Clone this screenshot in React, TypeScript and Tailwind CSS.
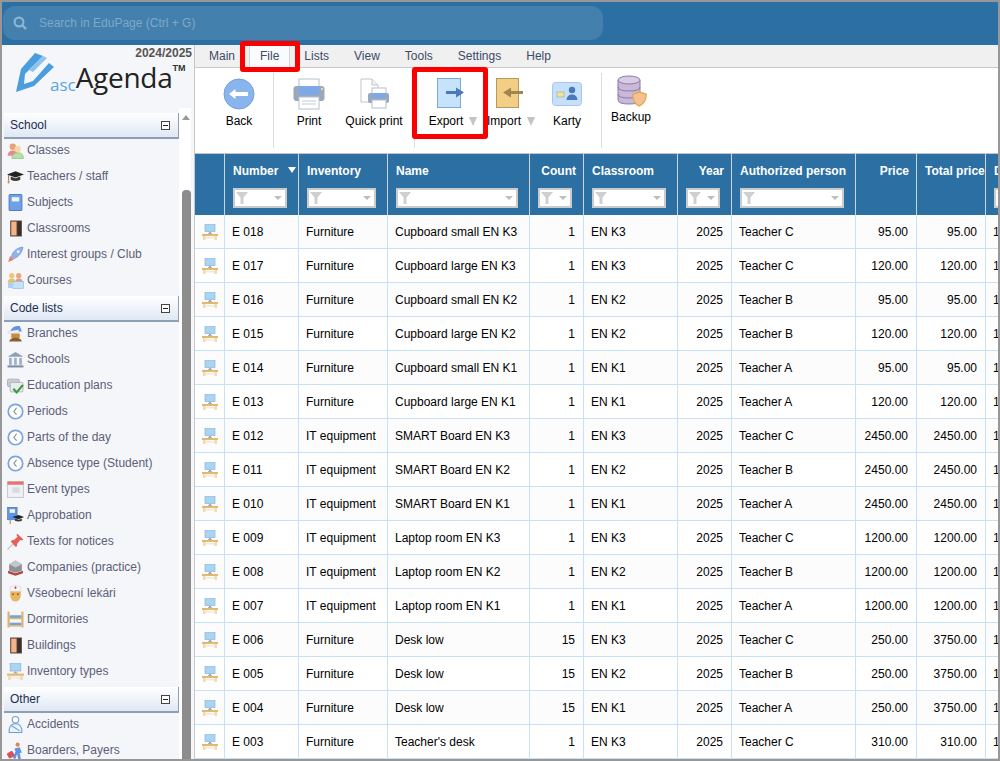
import React from "react";

type Row = {
  id: string;
  inv: string;
  name: string;
  count: number;
  room: string;
  person: string;
  price: string;
  total: string;
};

const rows: Row[] = [
  { id: "E 018", inv: "Furniture", name: "Cupboard small EN K3", count: 1, room: "EN K3", person: "Teacher C", price: "95.00", total: "95.00" },
  { id: "E 017", inv: "Furniture", name: "Cupboard large EN K3", count: 1, room: "EN K3", person: "Teacher C", price: "120.00", total: "120.00" },
  { id: "E 016", inv: "Furniture", name: "Cupboard small EN K2", count: 1, room: "EN K2", person: "Teacher B", price: "95.00", total: "95.00" },
  { id: "E 015", inv: "Furniture", name: "Cupboard large EN K2", count: 1, room: "EN K2", person: "Teacher B", price: "120.00", total: "120.00" },
  { id: "E 014", inv: "Furniture", name: "Cupboard small EN K1", count: 1, room: "EN K1", person: "Teacher A", price: "95.00", total: "95.00" },
  { id: "E 013", inv: "Furniture", name: "Cupboard large EN K1", count: 1, room: "EN K1", person: "Teacher A", price: "120.00", total: "120.00" },
  { id: "E 012", inv: "IT equipment", name: "SMART Board EN K3", count: 1, room: "EN K3", person: "Teacher C", price: "2450.00", total: "2450.00" },
  { id: "E 011", inv: "IT equipment", name: "SMART Board EN K2", count: 1, room: "EN K2", person: "Teacher B", price: "2450.00", total: "2450.00" },
  { id: "E 010", inv: "IT equipment", name: "SMART Board EN K1", count: 1, room: "EN K1", person: "Teacher A", price: "2450.00", total: "2450.00" },
  { id: "E 009", inv: "IT equipment", name: "Laptop room EN K3", count: 1, room: "EN K3", person: "Teacher C", price: "1200.00", total: "1200.00" },
  { id: "E 008", inv: "IT equipment", name: "Laptop room EN K2", count: 1, room: "EN K2", person: "Teacher B", price: "1200.00", total: "1200.00" },
  { id: "E 007", inv: "IT equipment", name: "Laptop room EN K1", count: 1, room: "EN K1", person: "Teacher A", price: "1200.00", total: "1200.00" },
  { id: "E 006", inv: "Furniture", name: "Desk low", count: 15, room: "EN K3", person: "Teacher C", price: "250.00", total: "3750.00" },
  { id: "E 005", inv: "Furniture", name: "Desk low", count: 15, room: "EN K2", person: "Teacher B", price: "250.00", total: "3750.00" },
  { id: "E 004", inv: "Furniture", name: "Desk low", count: 15, room: "EN K1", person: "Teacher A", price: "250.00", total: "3750.00" },
  { id: "E 003", inv: "Furniture", name: "Teacher's desk", count: 1, room: "EN K3", person: "Teacher C", price: "310.00", total: "310.00" },
];

function Ico({ children, size = 17 }: { children: React.ReactNode; size?: number }) {
  return (
    <svg width={size} height={size} viewBox="0 0 16 16" className="block shrink-0">
      {children}
    </svg>
  );
}

const DeskIcon = ({ size = 16 }: { size?: number }) => (
  <Ico size={size}>
    <rect x="3" y="0" width="10" height="7.5" fill="#a9d5f2" stroke="#8cb4d2" strokeWidth="0.7" />
    <rect x="7" y="8" width="2" height="1.5" fill="#9aa7b0" />
    <rect x="6" y="9" width="4" height="0.8" fill="#9aa7b0" />
    <rect x="0" y="10" width="16" height="2" fill="#e2b96f" />
    <rect x="1" y="12" width="2.6" height="4" fill="#efdcb4" />
    <rect x="12.4" y="12" width="2.6" height="4" fill="#efdcb4" />
    <rect x="3.6" y="13" width="8.8" height="1.4" fill="#f3e7cd" />
  </Ico>
);

const ClockIcon = () => (
  <Ico>
    <circle cx="8" cy="8" r="6.8" fill="#fff" stroke="#7ba3de" strokeWidth="1.6" />
    <path d="M9 4.5 L6.5 8 L9 11" fill="none" stroke="#7d8794" strokeWidth="1" />
  </Ico>
);

const DoorIcon = () => (
  <Ico>
    <rect x="3" y="0.5" width="11" height="15" fill="#5a3f38" />
    <rect x="4" y="1.5" width="5" height="13" fill="#f4b48a" />
    <rect x="10" y="1.5" width="3" height="13" fill="#33302f" />
  </Ico>
);

const CapIcon = () => (
  <Ico>
    <path d="M0 6 L8 3 L16 6 L8 9 Z" fill="#222" />
    <path d="M3.5 8 L3.5 11 Q8 13.5 12.5 11 L12.5 8 L8 9.6 Z" fill="#3a3a3a" />
    <path d="M1.5 6.5 V12" stroke="#b5764a" strokeWidth="1" />
    <rect x="0.7" y="12" width="1.6" height="2.5" fill="#d08a50" />
  </Ico>
);

const BookIcon = () => (
  <Ico>
    <rect x="2" y="0.5" width="12" height="15" rx="1" fill="#6f9fe6" stroke="#4f7fc8" />
    <rect x="4.5" y="3" width="7" height="4" fill="#eef4fd" />
  </Ico>
);

const menuIcons: Record<string, React.ReactNode> = {
  people: (
    <Ico>
      <circle cx="5.5" cy="4.5" r="3" fill="#e8a07c" />
      <path d="M0.5 13 Q1 8 5.5 8 Q10 8 10 13 Z" fill="#e88a8a" />
      <circle cx="10" cy="6.5" r="3" fill="#f6d9a2" />
      <path d="M4.5 15.5 Q5 10 10 10 Q15.5 10 15.5 15.5 Z" fill="#b8dfa8" stroke="#8fb886" strokeWidth="0.6" />
    </Ico>
  ),
  cap: <CapIcon />,
  book: <BookIcon />,
  door: <DoorIcon />,
  rocket: (
    <Ico>
      <path d="M15 1 Q9 1.5 5.5 6.5 L4 10 L6.5 12 L10 10 Q14.5 6.5 15 1 Z" fill="#8fb4ec" stroke="#6b93d6" strokeWidth="0.6" />
      <circle cx="10.5" cy="5.5" r="1.4" fill="#e8f1fc" />
      <path d="M1 15 L3 9.5 L6.5 13 Z" fill="#e87b6d" />
    </Ico>
  ),
  courses: (
    <Ico>
      <circle cx="4.5" cy="3.5" r="2.5" fill="#f0c27a" />
      <circle cx="11" cy="3.5" r="2.5" fill="#eba77c" />
      <path d="M0.5 10 Q1 6 4.5 6 Q8 6 8 10 Z" fill="#e8c25f" />
      <path d="M7.5 10 Q8 6 11 6 Q15 6 15 10 Z" fill="#e89a80" />
      <rect x="5.5" y="9" width="10" height="6.5" fill="#c5e2f8" stroke="#8fb9dd" strokeWidth="0.6" />
      <rect x="1" y="10" width="4" height="5" fill="#a9cfee" />
    </Ico>
  ),
  nurseBlue: (
    <Ico>
      <path d="M3 6 Q5 0.5 12 1 L14 6 Z" fill="#5f94e0" />
      <path d="M1 6 L11 4.5 L11 7 L1 8 Z" fill="#f4f4f4" stroke="#c9c9c9" strokeWidth="0.4" />
      <path d="M4 8 H12 V12 Q8 15.5 4 12 Z" fill="#c98a48" />
      <path d="M2 15.5 Q3 12 8 12 Q13 12 14 15.5 Z" fill="#8a5f2e" />
    </Ico>
  ),
  bank: (
    <Ico>
      <path d="M0.5 5.5 L8 1 L15.5 5.5 Z" fill="#8fa0b5" />
      <rect x="2" y="6.5" width="2.5" height="6.5" fill="#9db0c6" />
      <rect x="6.7" y="6.5" width="2.5" height="6.5" fill="#9db0c6" />
      <rect x="11.5" y="6.5" width="2.5" height="6.5" fill="#9db0c6" />
      <rect x="0.5" y="13.5" width="15" height="2" fill="#7f90a6" />
    </Ico>
  ),
  plan: (
    <Ico>
      <rect x="0.5" y="2" width="11" height="7" rx="1" fill="#c9ced4" stroke="#9099a3" strokeWidth="0.6" />
      <rect x="3" y="5" width="12" height="9" rx="1" fill="#e9ecef" stroke="#9099a3" strokeWidth="0.6" />
      <path d="M6 11 L9 14.5 L15 7.5" fill="none" stroke="#3d9a3d" strokeWidth="2" />
    </Ico>
  ),
  clock: <ClockIcon />,
  calendar: (
    <Ico>
      <rect x="0.5" y="0.5" width="15" height="15" fill="#eef1f5" stroke="#c5ccd4" />
      <rect x="0.5" y="0.5" width="15" height="3" fill="#e8746d" />
      <rect x="5" y="6" width="7" height="5" fill="#d6dbe2" />
    </Ico>
  ),
  approb: (
    <Ico>
      <rect x="0.5" y="0" width="9" height="12" fill="#5f94e0" stroke="#4276c4" strokeWidth="0.6" />
      <rect x="2.5" y="2" width="5" height="3.5" fill="#eef4fd" />
      <path d="M5 9.5 L11 7.5 L16 9.5 L11 11.5 Z" fill="#222" />
      <path d="M7.5 11 V13 Q11 14.5 14 13 V11 L11 12 Z" fill="#3a3a3a" />
      <path d="M3 12 V16" stroke="#c57a4a" />
    </Ico>
  ),
  pin: (
    <Ico>
      <path d="M9.5 0.5 L15.5 6 L13.5 7 L12.5 6.5 L9.5 10 L9.5 12.5 L8 13 L3.5 8 L5 6.5 L6.5 6.5 L10 3.5 L9 2 Z" fill="#e8605a" />
      <path d="M5.5 10.5 L0.5 15.5" stroke="#b9bcc2" strokeWidth="1" />
    </Ico>
  ),
  company: (
    <Ico>
      <path d="M2 5 L8 1.5 L14 5 L14 11 L8 13 L2 11 Z" fill="#8d9296" />
      <path d="M2 5 L8 8 L14 5 L8 1.5 Z" fill="#c3c7ca" />
      <path d="M1 11 L8 13.5 L15 11 L15 13.5 L8 15.8 L1 13.5 Z" fill="#b8403a" />
    </Ico>
  ),
  nurse: (
    <Ico>
      <path d="M3 2 Q8 -1 13 2 L13 6 L3 6 Z" fill="#f7f7f7" stroke="#c9c9c9" strokeWidth="0.5" />
      <path d="M7 2.5 H9 M8 1.5 V3.5" stroke="#d33" strokeWidth="1" />
      <path d="M3 6 H13 V10 Q12 15.5 8 15.5 Q4 15.5 3 10 Z" fill="#e8b564" />
      <rect x="5" y="8" width="1.4" height="1.4" fill="#6a4a20" />
      <rect x="9.6" y="8" width="1.4" height="1.4" fill="#6a4a20" />
    </Ico>
  ),
  bunk: (
    <Ico>
      <rect x="0.5" y="0.5" width="2" height="15" fill="#d9b26c" />
      <rect x="13.5" y="0.5" width="2" height="15" fill="#d9b26c" />
      <rect x="2.5" y="4" width="11" height="2.5" fill="#7ba3c9" />
      <rect x="2.5" y="6.5" width="11" height="1.2" fill="#d9b26c" />
      <rect x="2.5" y="11" width="11" height="2.5" fill="#7ba3c9" />
      <rect x="2.5" y="13.5" width="11" height="1.2" fill="#d9b26c" />
    </Ico>
  ),
  desk: <DeskIcon size={17} />,
  accident: (
    <Ico>
      <circle cx="8" cy="3.5" r="3" fill="#fff" stroke="#6f9fd0" />
      <path d="M2 15.5 Q1.5 7.5 8 7 Q14.5 7.5 14 15.5 Z" fill="#eaf3fb" stroke="#6f9fd0" />
      <path d="M4 9 L12 14" stroke="#6f9fd0" />
    </Ico>
  ),
  boarder: (
    <Ico>
      <circle cx="10" cy="2.5" r="2" fill="#d98a4a" />
      <path d="M7 6 L12 5 L14 10 L12 10 L13 16 L10.5 16 L9.5 11 L8 16 L5.5 15 L8 9 Z" fill="#5f94e0" />
      <rect x="0.5" y="9.5" width="6" height="5.5" rx="1" transform="rotate(-30 3 12)" fill="#d8505a" />
    </Ico>
  ),
};

const sections = [
  {
    title: "School",
    items: [
      ["people", "Classes"],
      ["cap", "Teachers / staff"],
      ["book", "Subjects"],
      ["door", "Classrooms"],
      ["rocket", "Interest groups / Club"],
      ["courses", "Courses"],
    ],
  },
  {
    title: "Code lists",
    items: [
      ["nurseBlue", "Branches"],
      ["bank", "Schools"],
      ["plan", "Education plans"],
      ["clock", "Periods"],
      ["clock", "Parts of the day"],
      ["clock", "Absence type (Student)"],
      ["calendar", "Event types"],
      ["approb", "Approbation"],
      ["pin", "Texts for notices"],
      ["company", "Companies (practice)"],
      ["nurse", "Všeobecní lekári"],
      ["bunk", "Dormitories"],
      ["door", "Buildings"],
      ["desk", "Inventory types"],
    ],
  },
  {
    title: "Other",
    items: [
      ["accident", "Accidents"],
      ["boarder", "Boarders, Payers"],
    ],
  },
];

function Filter({ w }: { w: string }) {
  return (
    <div className={`${w} mt-[10px] flex h-[20px] items-center justify-between border-2 border-[#cbcbcb] bg-white pl-[1px] pr-[3px]`}>
      <svg width="12" height="12" viewBox="0 0 12 12">
        <path d="M0 0 H12 L7.5 5.5 V12 H4.5 V5.5 Z" fill="#cfcfcf" />
      </svg>
      <span className="h-0 w-0 border-x-[4px] border-t-[4px] border-x-transparent border-t-[#bdbdbd]" />
    </div>
  );
}

function Head({ label, filter, right, sort }: { label: string; filter?: string; right?: boolean; sort?: boolean }) {
  return (
    <th className="relative overflow-hidden border-r border-[#c9d6e2] p-0 pl-2 pt-[10px] align-top font-bold text-white">
      <div className={`h-[14px] whitespace-nowrap leading-[14px] ${right ? "pr-[7px] text-right" : "text-left"}`}>{label}</div>
      {sort && <span className="absolute right-[2px] top-[13px] h-0 w-0 border-x-[4px] border-t-[6px] border-x-transparent border-t-white" />}
      {filter && <Filter w={filter} />}
    </th>
  );
}

function ToolLabel({ text, arrow }: { text: string; arrow?: boolean }) {
  return (
    <div className="flex h-[14px] items-center justify-center gap-[6px] whitespace-nowrap leading-[14px] text-black">
      <span>{text}</span>
      {arrow && <span className="h-0 w-0 border-x-[4.5px] border-t-[9px] border-x-transparent border-t-[#c4c4c4]" />}
    </div>
  );
}

export default function App() {
  const td = "border-r border-b border-[#c6e2fb] p-0 pl-[7px] pr-2 text-black whitespace-nowrap overflow-hidden";
  return (
    <div
      className="relative flex h-[761px] w-[1000px] flex-col overflow-hidden border-2 border-[#979797] text-[12px]"
      style={{ fontFamily: '"Liberation Sans", Arial, sans-serif' }}
    >
      <header className="h-[43px] shrink-0 bg-[#2c6fa3] pl-px pt-[4px]">
        <div className="flex h-[34px] w-[600px] items-center rounded-[12px] bg-[#4380ae] pl-[10px] text-[#7fa8c9]">
          <svg width="14" height="14" viewBox="0 0 14 14" className="mr-[12px]">
            <circle cx="6" cy="6" r="4.4" fill="none" stroke="#8fb4d2" strokeWidth="2.2" />
            <path d="M9.2 9.2 L13 13" stroke="#8fb4d2" strokeWidth="2.4" />
          </svg>
          Search in EduPage (Ctrl + G)
        </div>
      </header>

      <div className="flex min-h-0 flex-1">
        <aside className="flex w-[192px] shrink-0 flex-col bg-[#f5f6f9]">
          <div className="relative h-[63px] shrink-0">
            <div className="pr-[2px] pt-px text-right font-bold leading-[14px] text-[#555]">2024/2025</div>
            <div className="absolute left-[14px] top-[8px] flex items-start">
              <svg width="40" height="40" viewBox="0 0 40 40" className="block">
                <path d="M19 0 L27 3 L9 21 L8 31 L17 28 L33 10 L38 14 L18 33 L0 39 L5 16 Z" fill="#4a9ee0" />
                <path d="M13 17 L27 3 L31 5 L17 19 Z" fill="#8cc4ee" />
              </svg>
              <span className="ml-[-6px] mt-[22px] text-[17px] leading-[20px] text-[#5aa6e0]" style={{ fontFamily: '"Open Sans", sans-serif' }}>
                asc
              </span>
              <span className="mt-[6px] text-[28px] leading-[36px] tracking-[-0.3px] text-[#222]" style={{ fontFamily: '"Open Sans", sans-serif' }}>
                Agenda
              </span>
              <span className="mt-[11px] text-[9px] font-bold leading-[9px] text-[#333]">TM</span>
            </div>
          </div>
          <div className="flex min-h-0 flex-1">
            <div className="w-[177px] shrink-0 overflow-hidden pl-[2px] pt-[5px]">
              {sections.map((s, i) => (
                <div key={s.title} className={i > 0 ? "mt-px" : ""}>
                  <div className="flex h-[26px] items-center justify-between border-r border-b-2 border-[#8c9fb5] bg-gradient-to-b from-white to-[#dfe8f4] pl-[6px] pr-[8px] text-[#1c2c50]">
                    {s.title}
                    <span className="flex h-[9px] w-[9px] items-center justify-center border border-[#444] bg-white">
                      <span className="h-px w-[5px] bg-[#222]" />
                    </span>
                  </div>
                  {s.items.map(([icon, label]) => (
                    <div key={label} className="flex h-[26px] items-center gap-[3px] pb-[4px] pl-[3px] text-[#5b6078]">
                      {menuIcons[icon]}
                      <span className="whitespace-nowrap">{label}</span>
                    </div>
                  ))}
                </div>
              ))}
            </div>
            <div className="flex w-[12px] shrink-0 flex-col items-end bg-white pt-[7px]">
              <span className="mr-[1px] h-0 w-0 border-x-[4px] border-b-[5px] border-x-transparent border-b-[#999]" />
              <div className="mt-[70px] w-[9px] flex-1 rounded-t-[4px] bg-[#8c8c8c]" />
            </div>
          </div>
        </aside>

        <main className="flex min-w-0 flex-1 flex-col border-l border-[#c8c8c8] bg-white">
          <nav className="flex h-[23px] shrink-0 items-center gap-[25px] border-b border-[#c8c8c8] bg-[#f0f0f0] pl-[14px] text-[#3d4a68]">
            <span>Main</span>
            <span className="-mx-[11px] flex h-full items-center border-x border-[#d5d5d5] bg-[#f9fbfd] px-[10px]">File</span>
            <span>Lists</span>
            <span>View</span>
            <span>Tools</span>
            <span>Settings</span>
            <span>Help</span>
          </nav>

          <div className="flex h-[86px] shrink-0 border-b border-[#c4c4c4]">
            <div className="ml-[14px] w-[60px] pt-[10px]">
              <svg width="32" height="32" viewBox="0 0 32 32" className="mx-auto block">
                <circle cx="16" cy="16" r="15" fill="#8ab4ee" stroke="#73a0e2" />
                <path d="M6 16 L12.5 11 V14 H25 V18 H12.5 V21 Z" fill="#fff" />
              </svg>
              <div className="mt-[4px]"><ToolLabel text="Back" /></div>
            </div>
            <div className="ml-[4px] mt-[5px] h-[75px] w-px bg-[#ddd]" />

            <div className="ml-[15px] w-[40px] pt-[10px]">
              <svg width="32" height="32" viewBox="0 0 32 32" className="mx-auto block">
                <rect x="6" y="1" width="20" height="9" fill="#fff" stroke="#b5bfcc" />
                <rect x="0.5" y="8" width="31" height="15" rx="3" fill="#9aa8bc" />
                <rect x="6" y="8" width="20" height="9" fill="#7ea8e8" />
                <rect x="28" y="10" width="2" height="2" fill="#e8d890" />
                <rect x="6" y="19" width="20" height="12" fill="#fff" stroke="#b5bfcc" />
                <path d="M9 23 H23 M9 26 H23" stroke="#c3cad4" />
              </svg>
              <div className="mt-[4px]"><ToolLabel text="Print" /></div>
            </div>

            <div className="ml-[15px] w-[60px] pt-[10px]">
              <svg width="32" height="32" viewBox="0 0 32 32" className="mx-auto block">
                <path d="M3 1 H14 L20 7 V24 H3 Z" fill="#fff" stroke="#c0c5cc" />
                <path d="M14 1 V7 H20" fill="#f0f2f5" stroke="#c0c5cc" />
                <rect x="14" y="10" width="14" height="6" fill="#fff" stroke="#b5bfcc" />
                <rect x="10" y="15" width="21" height="10" rx="2" fill="#9aa8bc" />
                <rect x="14" y="15" width="14" height="5" fill="#7ea8e8" />
                <rect x="14" y="22" width="14" height="8" fill="#fff" stroke="#b5bfcc" />
              </svg>
              <div className="mt-[4px]"><ToolLabel text="Quick print" /></div>
            </div>
            <div className="ml-[10px] mt-[5px] h-[75px] w-px bg-[#ddd]" />

            <div className="ml-[12px] w-[52px] pt-[10px]">
              <svg width="28" height="32" viewBox="0 0 28 32" className="mx-auto block -translate-x-[2px]">
                <rect x="0.5" y="0.5" width="23" height="29" fill="#c5e4fb" stroke="#7fa8da" />
                <path d="M9 13 H19 V9.5 L27 14.5 L19 19.5 V16 H9 Z" fill="#4a78b8" />
              </svg>
              <div className="mt-[4px]"><ToolLabel text="Export" arrow /></div>
            </div>

            <div className="ml-[6px] w-[52px] pt-[10px]">
              <svg width="28" height="32" viewBox="0 0 28 32" className="mx-auto block -translate-x-[1px]">
                <rect x="0.5" y="0.5" width="22" height="29" fill="#f3cf85" stroke="#b59a60" />
                <path d="M27 13 H15 V9.5 L7 14.5 L15 19.5 V16 H27 Z" fill="#a08550" />
              </svg>
              <div className="mt-[4px]"><ToolLabel text="Import" arrow /></div>
            </div>

            <div className="ml-[15px] w-[30px] pt-[10px]">
              <svg width="30" height="32" viewBox="0 0 30 32" className="mx-auto block">
                <rect x="0.5" y="4.5" width="29" height="23" rx="3" fill="#c5e0fa" stroke="#a9c5ea" />
                <rect x="5" y="14" width="7" height="5" fill="#f0e3a0" stroke="#b5ad7c" strokeWidth="0.7" />
                <circle cx="20" cy="12" r="3.2" fill="#4a78b8" />
                <path d="M14.5 22 Q15 16.5 20 16.5 Q25 16.5 25.5 22 Z" fill="#4a78b8" />
              </svg>
              <div className="mt-[4px]"><ToolLabel text="Karty" /></div>
            </div>
            <div className="ml-[19px] mt-[5px] h-[75px] w-px bg-[#ddd]" />

            <div className="ml-[9px] w-[40px] pt-[7px]">
              <svg width="32" height="32" viewBox="0 0 32 32" className="mx-auto block">
                <path d="M3 5 V25 Q3 29 14 29 Q25 29 25 25 V5 Z" fill="#c9b8d9" stroke="#8d7ba5" />
                <ellipse cx="14" cy="5" rx="11" ry="4" fill="#d8cbe4" stroke="#8d7ba5" />
                <path d="M3 12 Q3 16 14 16 Q25 16 25 12 M3 19 Q3 23 14 23 Q25 23 25 19" fill="none" stroke="#8d7ba5" />
                <path d="M24 17 L31 19 Q32 27 24 31 Q17 27 18 19 Z" fill="#f8bf95" stroke="#d9b050" strokeWidth="1.4" />
              </svg>
              <div className="mt-[3px]"><ToolLabel text="Backup" /></div>
            </div>
          </div>

          <div className="min-h-0 flex-1 overflow-hidden">
            <table className="w-[891px] table-fixed border-separate border-spacing-0">
              <colgroup>
                <col className="w-[30px]" />
                <col className="w-[74px]" />
                <col className="w-[89px]" />
                <col className="w-[142px]" />
                <col className="w-[54px]" />
                <col className="w-[94px]" />
                <col className="w-[54px]" />
                <col className="w-[124px]" />
                <col className="w-[61px]" />
                <col className="w-[69px]" />
                <col className="w-[100px]" />
              </colgroup>
              <thead>
                <tr className="h-[61px] bg-[#2c6fa3]">
                  <Head label="" />
                  <Head label="Number" filter="w-[54px]" sort />
                  <Head label="Inventory" filter="w-[69px]" />
                  <Head label="Name" filter="w-[122px]" />
                  <Head label="Count" filter="w-[34px]" right />
                  <Head label="Classroom" filter="w-[74px]" />
                  <Head label="Year" filter="w-[34px]" right />
                  <Head label="Authorized person" filter="w-[104px]" />
                  <Head label="Price" right />
                  <Head label="Total price" />
                  <Head label="Date" filter="w-[30px]" />
                </tr>
              </thead>
              <tbody>
                {rows.map((r, i) => (
                  <tr key={r.id} className={`h-[34px] ${i % 2 === 0 ? "bg-[#fcfcfc]" : "bg-white"}`}>
                    <td className="border-r border-b border-[#c6e2fb] p-0">
                      <div className="flex justify-center"><DeskIcon /></div>
                    </td>
                    <td className={td}>{r.id}</td>
                    <td className={td}>{r.inv}</td>
                    <td className={td}>{r.name}</td>
                    <td className={`${td} text-right`}>{r.count}</td>
                    <td className={td}>{r.room}</td>
                    <td className={`${td} text-right`}>2025</td>
                    <td className={td}>{r.person}</td>
                    <td className={`${td} text-right`}>{r.price}</td>
                    <td className={`${td} text-right`}>{r.total}</td>
                    <td className={td}>1</td>
                  </tr>
                ))}
              </tbody>
            </table>
          </div>
        </main>
      </div>

      {/* red highlights drawn over the screenshot */}
      <div className="absolute left-[238px] top-[39px] h-[31px] w-[60px] rounded-[3px] border-[5px] border-[#fa0000]" />
      <div className="absolute left-[410px] top-[65px] h-[72px] w-[76px] rounded-[3px] border-[5px] border-[#fa0000]" />
    </div>
  );
}
